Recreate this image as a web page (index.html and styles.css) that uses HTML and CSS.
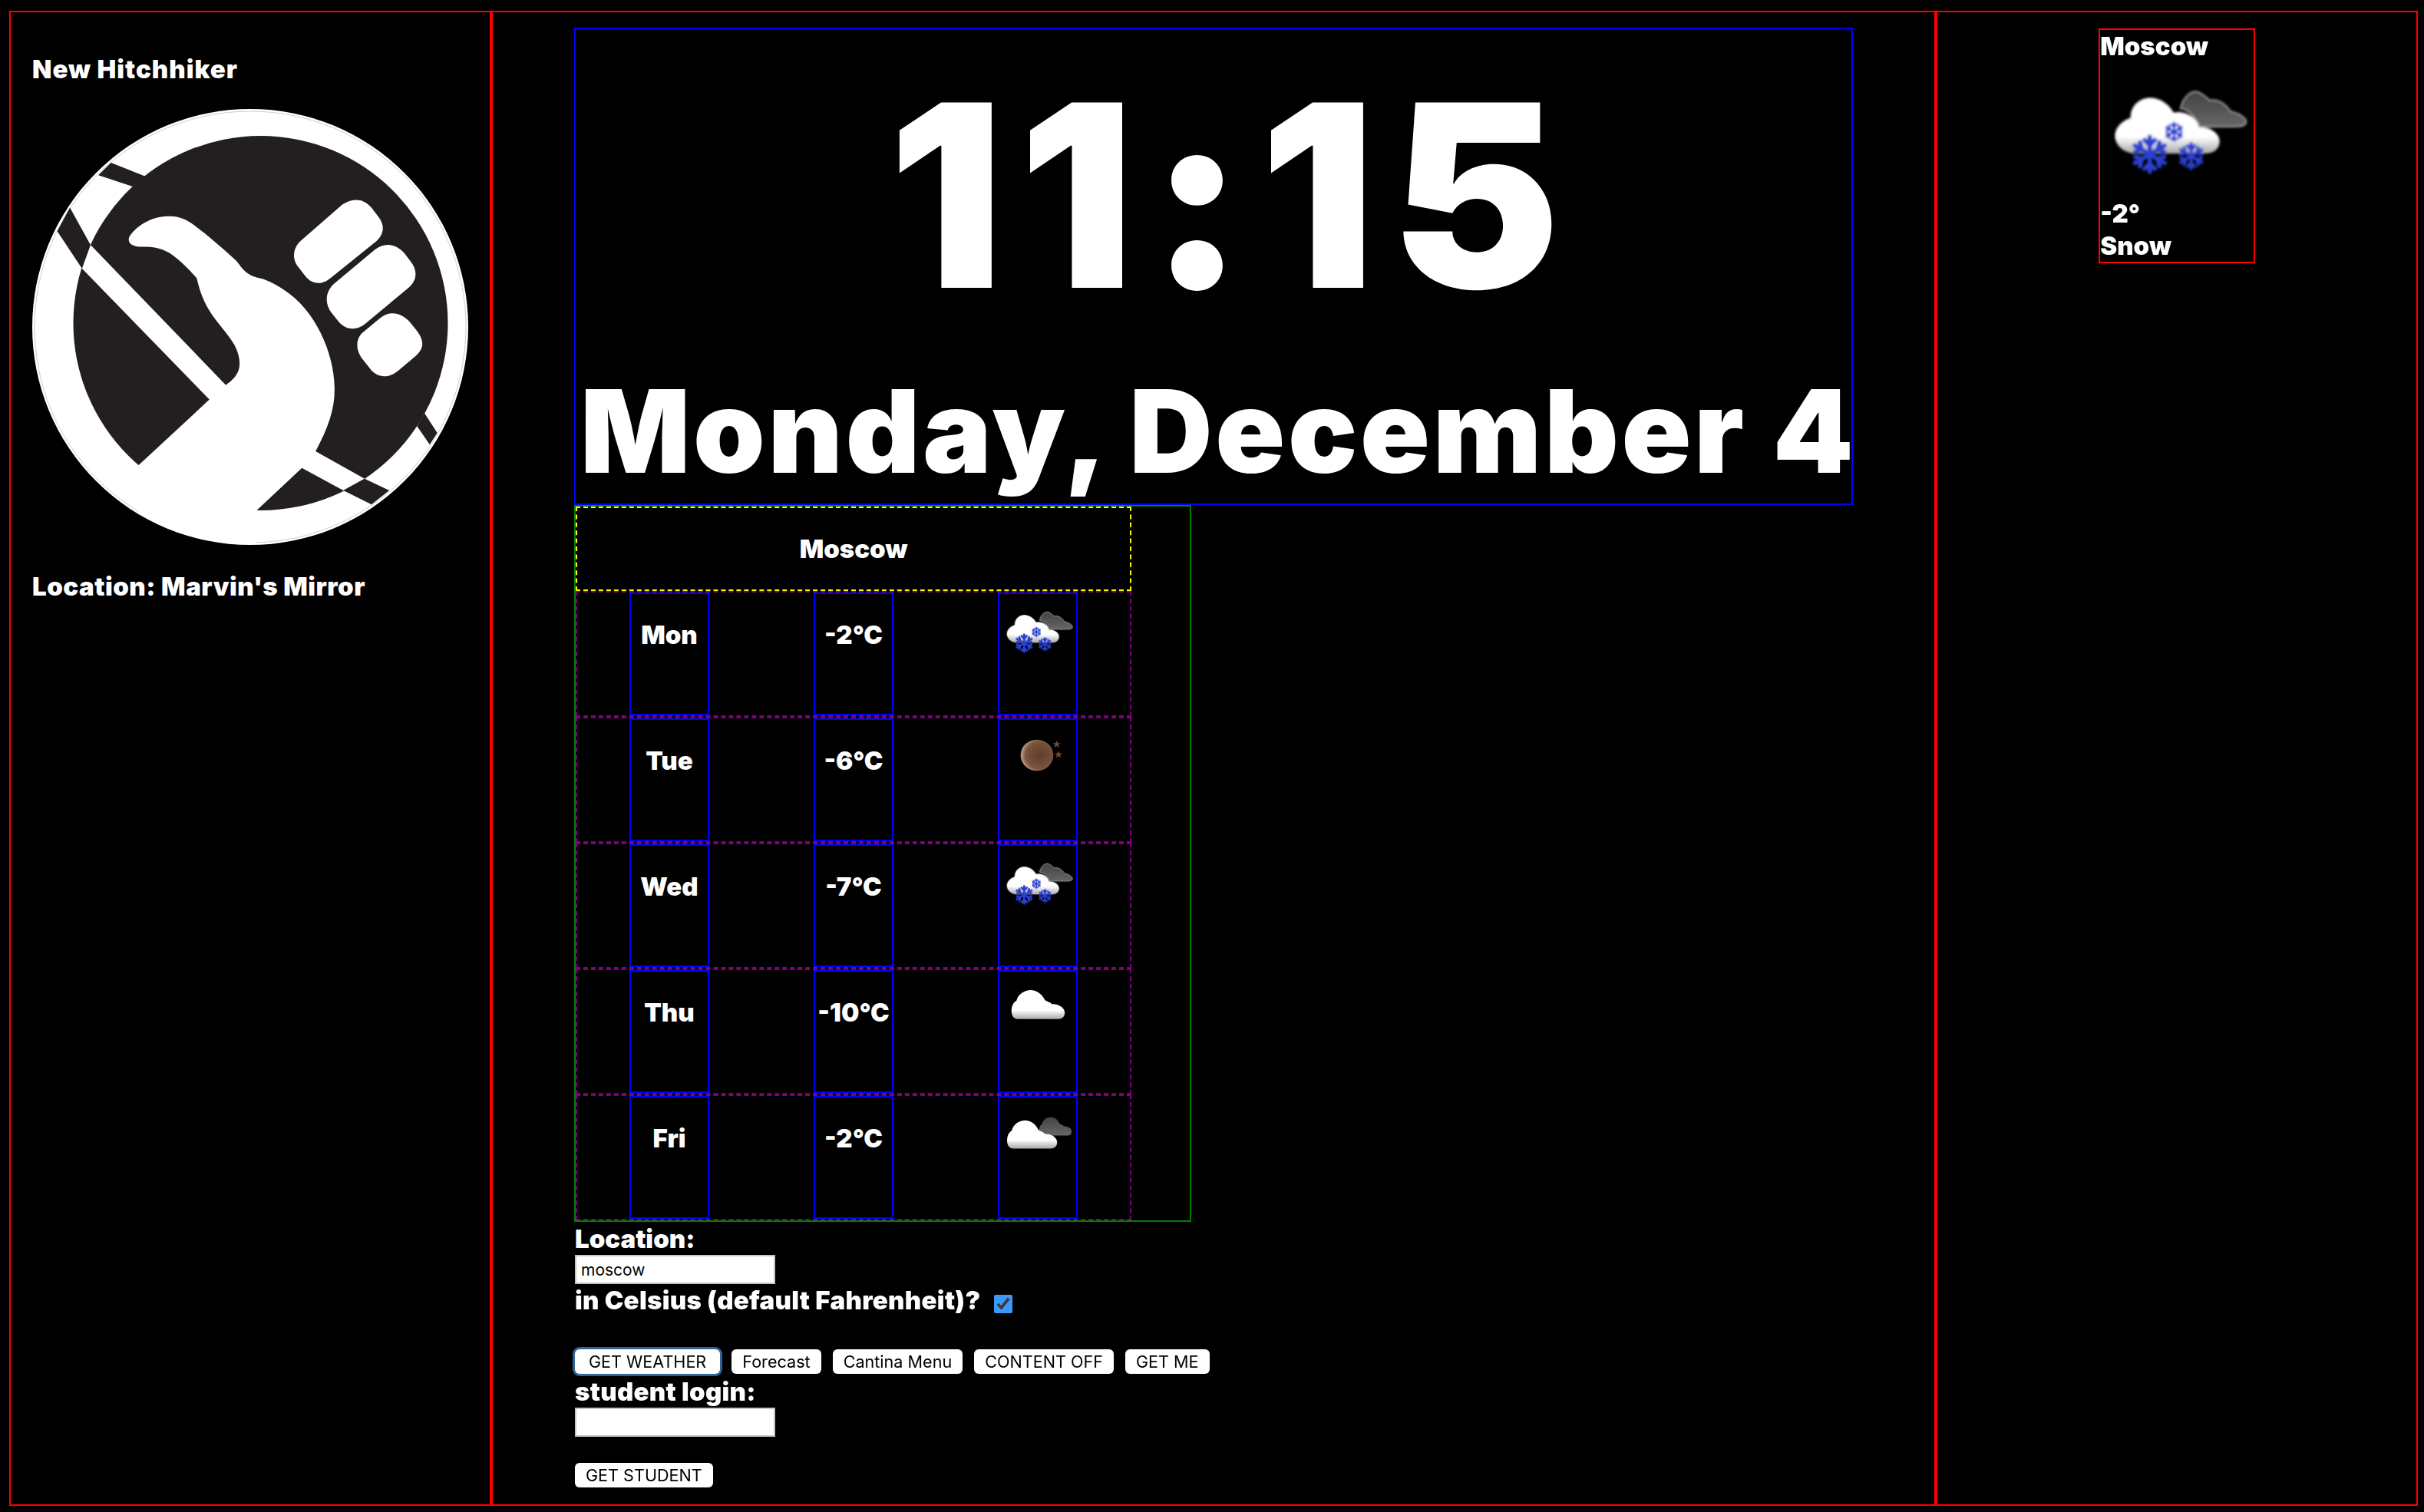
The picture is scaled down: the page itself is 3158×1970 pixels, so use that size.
FILE: index.html
```html
<!DOCTYPE html>
<html lang="en">
<head>
    <meta charset="UTF-8">
    <title>New Hitchhiker</title>
    <link rel="stylesheet" href="styles.css">
</head>
<body>
    <svg class="defs" width="0" height="0">
        <defs>
            <filter id="soft" x="-10%" y="-10%" width="120%" height="120%"><feGaussianBlur stdDeviation="4"/></filter>
            <linearGradient id="cloud-white" x1="0" y1="0" x2="0" y2="1">
                <stop offset="0" stop-color="#fff"/>
                <stop offset="0.7" stop-color="#fff"/>
                <stop offset="1" stop-color="#a8a8a8"/>
            </linearGradient>
            <linearGradient id="cloud-dark" x1="0" y1="0" x2="0" y2="1">
                <stop offset="0" stop-color="#444"/>
                <stop offset="1" stop-color="#666"/>
            </linearGradient>
            <radialGradient id="moon-fill" cx="0.6" cy="0.5" r="0.6">
                <stop offset="0" stop-color="#5e3d2a"/>
                <stop offset="0.75" stop-color="#7a553e"/>
                <stop offset="1" stop-color="#c8a48c"/>
            </radialGradient>
            <path id="cloud-shape" d="M256,590 C215,590 203,550 206,513 C210,480 225,455 245,445 C255,395 310,363 354,363 C405,363 450,400 468,443 C490,455 510,460 522,473 C570,470 622,500 622,540 C622,572 600,590 570,590 Z"/>
            <g id="flake" stroke-linecap="round">
                <path d="M0,-68V68M-58,-34L58,34M-58,34L58,-34M-20,-56L0,-36L20,-56M-20,56L0,36L20,56M-56,-10L-31,-18L-38,-46M56,10L31,18L38,46M-56,10L-31,18L-38,46M56,-10L31,-18L38,-46"/>
            </g>
            <symbol id="icon-snow" viewBox="111 219 600 600">
                <g filter="url(#soft)">
                    <path fill="url(#cloud-dark)" stroke="#999" stroke-width="6" d="M425,425 C435,375 470,352 495,360 C515,368 530,385 540,392 C575,385 605,410 620,435 C650,440 685,460 682,480 C675,495 655,495 640,495 L500,495 C480,450 450,425 425,425 Z"/>
                    <path fill="url(#cloud-white)" d="M240,600 C175,590 150,530 185,490 C200,472 220,465 230,460 C230,405 275,380 310,382 C355,385 385,415 398,440 C445,430 490,460 498,498 C545,495 580,525 578,555 C575,590 545,600 520,600 Z"/>
                    <g fill="none" stroke="#2a3fd0" stroke-width="17">
                        <use href="#flake" transform="translate(305,603)"/>
                        <use href="#flake" transform="translate(467,610) scale(.72)"/>
                        <use href="#flake" transform="translate(400,515) scale(.52)"/>
                    </g>
                </g>
            </symbol>
            <symbol id="icon-moon" viewBox="111 219 600 600">
                <g filter="url(#soft)">
                    <ellipse cx="405" cy="495" rx="128" ry="122" fill="url(#moon-fill)"/>
                    <path fill="#6b4a35" d="M559,381l9,20h21l-17,13 6,21-19,-12-19,12 6,-21-17,-13h21zM573,460l9,20h21l-17,13 6,21-19,-12-19,12 6,-21-17,-13h21z"/>
                </g>
            </symbol>
            <symbol id="icon-cloud" viewBox="111 219 600 600">
                <use href="#cloud-shape" fill="url(#cloud-white)" filter="url(#soft)"/>
            </symbol>
            <symbol id="icon-partly" viewBox="111 219 600 600">
                <g filter="url(#soft)">
                    <use href="#cloud-shape" fill="url(#cloud-dark)" transform="translate(296,144) scale(.61 .63)"/>
                    <use href="#cloud-shape" fill="url(#cloud-white)" transform="translate(-22,45) scale(.94 .97)"/>
                </g>
            </symbol>
        </defs>
    </svg>

    <div class="page">
        <div class="col col-left">
            <div class="site-name">New Hitchhiker</div>
            <svg class="logo" width="568" height="568" viewBox="0 0 568 568">
                <defs>
                    <clipPath id="logo-clip"><circle cx="284" cy="284" r="283"/></clipPath>
                </defs>
                <circle cx="284" cy="284" r="284" fill="#fff"/>
                <circle cx="284" cy="284" r="281" fill="none" stroke="#aaa" stroke-width=".6"/>
                <circle cx="297.5" cy="279" r="244" fill="#231f20"/>
                <g clip-path="url(#logo-clip)">
                    <g transform="scale(.4464 .5102) translate(-95 -278)">
                        <path fill="#fff" d="M240,685 L612,1020 L405,1188 L405,1400 L750,1400 L750,1303 L882,1195 L1003,1252 L1065,1222 L922,1152 C960,1090 980,1040 977,985 C975,900 920,790 830,740 C800,722 775,712 750,708 C715,700 705,680 690,665 C640,625 600,595 560,570 C530,553 510,552 490,552 C440,552 395,580 378,605 C372,620 385,630 415,630 C460,628 490,640 510,655 C535,672 560,695 575,710 C582,735 590,760 610,790 C630,820 665,850 685,880 C700,905 705,930 695,950 C685,968 672,975 660,983 L265,625 Z"/>
                        <path fill="#231f20" d="M325,415 L425,450 L388,476 L288,447 Z M205,530 L265,625 L240,685 L168,590 Z M1065,1222 L1137,1252 L1085,1288 L1003,1252 Z M1240,1055 L1277,1105 L1255,1135 L1218,1088 Z"/>
                        <g fill="#fff">
                            <path d="M1000,522 C1030,505 1060,505 1085,530 L1105,553 C1125,575 1122,598 1100,615 L965,710 C945,725 915,730 892,705 L870,680 C850,655 860,630 878,615 Z"/>
                            <path d="M1095,637 C1125,618 1155,622 1180,645 L1200,668 C1220,690 1218,715 1195,733 L1065,828 C1040,845 1010,842 990,822 L968,798 C948,775 950,745 975,725 Z"/>
                            <path d="M1110,812 C1140,792 1170,798 1195,820 L1218,845 C1240,870 1238,890 1215,908 L1165,945 C1135,968 1100,965 1080,940 L1060,918 C1035,890 1040,860 1065,845 Z"/>
                        </g>
                    </g>
                </g>
            </svg>
            <div class="site-location">Location: Marvin's Mirror</div>
        </div>

        <div class="col col-center">
            <div class="center-inner">
                <div class="clock-box">
                    <div class="clock">11:15</div>
                    <div class="date">Monday, December 4</div>
                </div>

                <div class="forecast">
                    <div class="forecast-title">Moscow</div>
                    <div class="forecast-row">
                        <div class="cell">Mon</div>
                        <div class="cell">-2°C</div>
                        <div class="cell"><svg class="icon"><use href="#icon-snow"/></svg></div>
                    </div>
                    <div class="forecast-row">
                        <div class="cell">Tue</div>
                        <div class="cell">-6°C</div>
                        <div class="cell"><svg class="icon"><use href="#icon-moon"/></svg></div>
                    </div>
                    <div class="forecast-row">
                        <div class="cell">Wed</div>
                        <div class="cell">-7°C</div>
                        <div class="cell"><svg class="icon"><use href="#icon-snow"/></svg></div>
                    </div>
                    <div class="forecast-row">
                        <div class="cell">Thu</div>
                        <div class="cell">-10°C</div>
                        <div class="cell"><svg class="icon"><use href="#icon-cloud"/></svg></div>
                    </div>
                    <div class="forecast-row">
                        <div class="cell">Fri</div>
                        <div class="cell">-2°C</div>
                        <div class="cell"><svg class="icon"><use href="#icon-partly"/></svg></div>
                    </div>
                </div>

                <div class="controls">
                    <div class="label">Location:</div>
                    <input class="field" type="text" value="moscow">
                    <div class="label celsius">in Celsius (default Fahrenheit)? <input class="check" type="checkbox" checked></div>
                    <div class="buttons">
                        <button class="btn btn-focus">GET WEATHER</button>
                        <button class="btn">Forecast</button>
                        <button class="btn">Cantina Menu</button>
                        <button class="btn">CONTENT OFF</button>
                        <button class="btn">GET ME</button>
                    </div>
                    <div class="label student">student login:</div>
                    <input class="field" type="text">
                    <div class="buttons buttons-student">
                        <button class="btn">GET STUDENT</button>
                    </div>
                </div>
            </div>
        </div>

        <div class="col col-right">
            <div class="now">
                <div class="now-line">Moscow</div>
                <svg class="now-icon" viewBox="111 243 600 528"><use href="#icon-snow" x="111" y="219" width="600" height="600"/></svg>
                <div class="now-line">-2°</div>
                <div class="now-line">Snow</div>
            </div>
        </div>
    </div>
</body>
</html>
```

FILE: styles.css
```css
body {
    margin: 0;
    background: #000;
    color: #fff;
    font-family: "Inter", "Lato", "Liberation Sans", sans-serif;
    font-weight: 900;
    font-size: 33px;
}
.defs {
    display: block;
}
.page {
    display: grid;
    grid-template-columns: 20% 60% 20%;
    height: 1948px;
    margin: 14px 8px 0 12px;
}
.col {
    border: 2px solid red;
    box-sizing: border-box;
}

/* left column */
.col-left {
    padding: 44px 0 0 28px;
}
.site-name {
    line-height: 60px;
    letter-spacing: 1px;
}
.logo {
    display: block;
    margin-top: 22px;
}
.site-location {
    margin-top: 24px;
    line-height: 60px;
    letter-spacing: .5px;
}

/* clock */
.center-inner {
    width: 1666px;
    margin: 20px auto 0;
}
.clock-box {
    border: 2px solid blue;
    height: 622px;
    box-sizing: border-box;
    text-align: center;
}
.clock {
    font-size: 332px;
    line-height: 432px;
    letter-spacing: 20px;
    padding-left: 48px;
}
.date {
    font-size: 150px;
    line-height: 184px;
    letter-spacing: 3.7px;
    padding-left: 6px;
    white-space: nowrap;
}

/* forecast table */
.forecast {
    border: 2px solid green;
    width: 804px;
    box-sizing: border-box;
}
.forecast-title {
    border: 2px dashed yellow;
    box-sizing: border-box;
    width: 724px;
    height: 110px;
    line-height: 106px;
    text-align: center;
}
.forecast-row {
    border: 2px dashed purple;
    box-sizing: border-box;
    width: 724px;
    height: 164px;
    display: flex;
    justify-content: space-around;
}
.cell {
    border: 2px solid blue;
    box-sizing: border-box;
    width: 104px;
    height: 160px;
    text-align: center;
    line-height: 106px;
    white-space: nowrap;
}
.icon {
    display: block;
    width: 100px;
    height: 100px;
}

/* forms */
.controls {
    padding: 2px 0 0 1px;
}
.label {
    line-height: 40px;
}
.field {
    display: block;
    box-sizing: border-box;
    width: 261px;
    height: 38px;
    margin: 1px 0 0;
    padding: 2px 6px;
    border: 2px solid #c4c4c4;
    background: #fff;
    font-family: "Inter", "Liberation Sans", sans-serif;
    font-weight: 400;
    font-size: 21px;
    color: #000;
}
.celsius {
    margin-top: 1px;
    letter-spacing: .3px;
}
.check {
    width: 24px;
    height: 24px;
    margin: 0 0 0 11px;
    vertical-align: -5px;
    accent-color: #3b99fc;
}
.buttons {
    display: flex;
    gap: 15px;
    margin-top: 44px;
}
.buttons-student {
    margin-top: 34px;
}
.btn {
    height: 32px;
    padding: 0 14px;
    border: 0;
    border-radius: 6px;
    background: #fff;
    color: #000;
    font-family: "Inter", "Liberation Sans", sans-serif;
    font-size: 21.6px;
    line-height: 32px;
}
.btn-focus {
    padding: 0 18px;
    box-shadow: 0 0 0 3px #2f6295;
}
.student {
    margin-top: 3px;
    letter-spacing: .3px;
}

/* current weather */
.col-right {
    display: flex;
    justify-content: center;
}
.now {
    border: 2px solid red;
    box-sizing: border-box;
    width: 204px;
    height: 306px;
    margin: 21px 0 0 0;
}
.now-line {
    line-height: 42px;
    white-space: nowrap;
}
.now-icon {
    display: block;
    width: 200px;
    height: 176px;
}
```
